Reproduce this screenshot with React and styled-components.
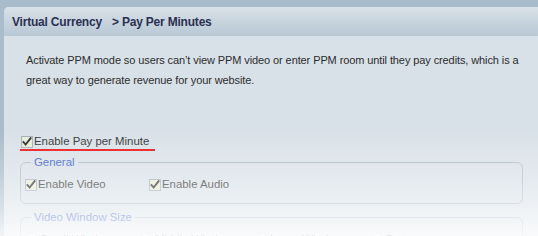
import React from 'react';
import styled, { createGlobalStyle } from 'styled-components';

const GlobalStyle = createGlobalStyle`
  html, body {
    margin: 0;
    padding: 0;
    background: #a9bccb;
    overflow: hidden;
  }
`;

const sizes = ['Small Window', 'Middle Window', 'Large Window', 'Custom'];

const App = () => {
  return (
    <Page>
      <GlobalStyle />
      <Panel>
        <Header>
          Virtual Currency<Crumb>&gt; Pay Per Minutes</Crumb>
        </Header>
        <Body>
          <Intro>
            Activate PPM mode so users can’t view PPM video or enter PPM room until they pay credits, which is a
            great way to generate revenue for your website.
          </Intro>
          <MainOption>
            <Check label="Enable Pay per Minute" />
          </MainOption>
          <Group>
            <Legend>General</Legend>
            <OptionRow $col={124}>
              <Check label="Enable Video" />
              <Check label="Enable Audio" />
            </OptionRow>
          </Group>
          <Group $gap={7}>
            <Legend>Video Window Size</Legend>
            <OptionRow $col={115}>
              {sizes.map((s) => (
                <Radio key={s} label={s} checked={s === 'Large Window'} />
              ))}
            </OptionRow>
          </Group>
        </Body>
      </Panel>
      <Fade />
    </Page>
  );
};

const Check = ({ label }) => (
  <Option>
    <Box>
      <svg width="10" height="10" viewBox="0 0 10 10">
        <path d="M1.5 5.2 L3.6 7.6 L8.6 1.2" fill="none" stroke="#2a2a2a" strokeWidth="1.9" strokeLinecap="square" />
      </svg>
    </Box>
    {label}
  </Option>
);

const Radio = ({ label, checked }) => (
  <Option>
    <Circle $checked={checked} />
    {label}
  </Option>
);

const Page = styled.div`
  position: relative;
  width: 538px;
  height: 236px;
  padding: 7px 0 0 4px;
  box-sizing: border-box;
  font-family: 'Liberation Sans', Arial, sans-serif;
`;

const Panel = styled.div`
  height: 100%;
  background: #d9e1e8;
  border-top-left-radius: 5px;
  overflow: hidden;
`;

const Header = styled.div`
  height: 29px;
  display: flex;
  align-items: center;
  padding-left: 8px;
  background: linear-gradient(#dae2e9 0%, #cdd8e0 35%, #c2d0db 65%, #b8c8d5 100%);
  color: #2b3052;
  font-weight: bold;
  font-size: 12px;
  letter-spacing: -0.2px;
`;

const Crumb = styled.span`
  margin-left: 10px;
`;

const Body = styled.div`
  padding: 14px 0 0 16px;
`;

const Intro = styled.p`
  margin: 0 0 0 6px;
  width: 500px;
  font-size: 11px;
  letter-spacing: -0.1px;
  line-height: 20px;
  color: #2c2c2c;
`;

const MainOption = styled.div`
  margin-top: 44px;
  width: 135px;
  padding: 0 0 0 1px;
  border-bottom: 2px solid #e8141b;
  box-sizing: border-box;
`;

const Group = styled.fieldset`
  margin: ${(p) => (p.$gap ? p.$gap : 5)}px 0 0 0;
  width: 503px;
  box-sizing: border-box;
  padding: 9px 0 11px 4px;
  border: 1px solid #aebdcc;
  border-radius: 6px;
`;

const Legend = styled.legend`
  margin-left: 6px;
  padding: 0 3px;
  font-size: 11.4px;
  color: #3a5ec6;
`;

const OptionRow = styled.div`
  display: grid;
  grid-template-columns: repeat(4, ${(p) => p.$col}px);
`;

const Option = styled.label`
  display: flex;
  align-items: center;
  font-size: 11.4px;
  line-height: 15px;
  color: #333;
  white-space: nowrap;
`;

const Box = styled.span`
  width: 10px;
  height: 10px;
  margin-right: 1px;
  display: inline-flex;
  border: 1px solid #a3b0b9;
  background: #e5ecd6;
`;

const Circle = styled.span`
  position: relative;
  width: 11px;
  height: 11px;
  margin-right: 2px;
  border-radius: 50%;
  border: 1px solid #b3bfc9;
  background: #f4f6f8;
  &::after {
    content: '';
    display: ${(p) => (p.$checked ? 'block' : 'none')};
    position: absolute;
    left: 3px;
    top: 3px;
    width: 5px;
    height: 5px;
    border-radius: 50%;
    background: #333;
  }
`;

// white wash over the lower part of the shot
const Fade = styled.div`
  position: absolute;
  inset: 0;
  pointer-events: none;
  background: linear-gradient(
    rgba(255, 255, 255, 0) 0px,
    rgba(255, 255, 255, 0) 130px,
    rgba(255, 255, 255, 0.28) 175px,
    rgba(255, 255, 255, 0.62) 215px,
    rgba(255, 255, 255, 0.86) 236px
  );
`;

export default App;
